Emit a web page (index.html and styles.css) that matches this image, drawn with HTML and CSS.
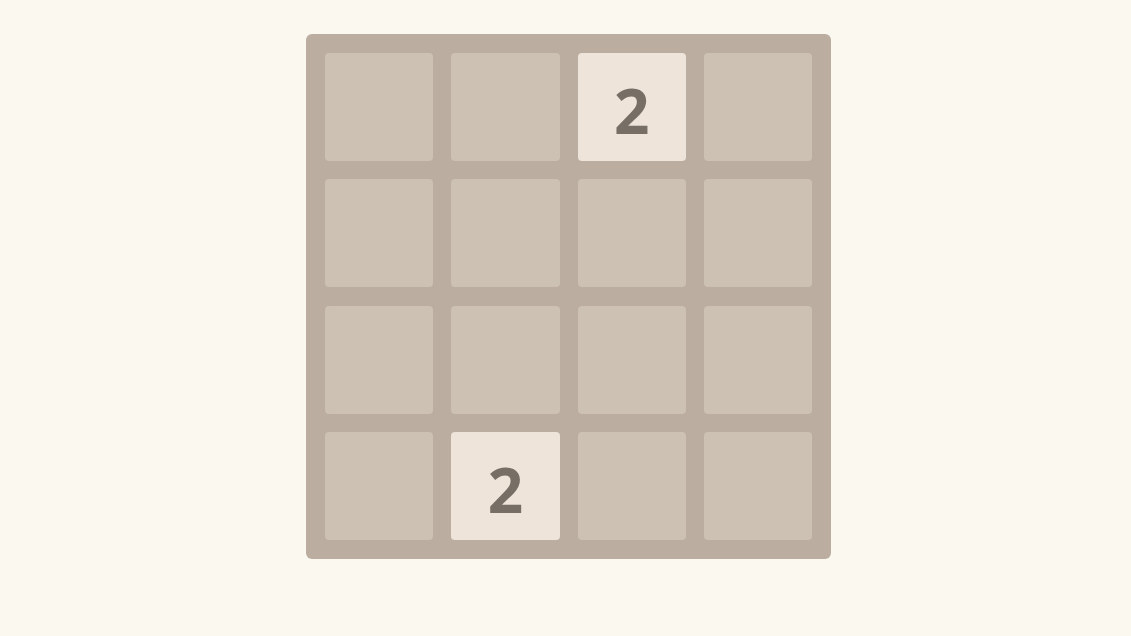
FILE: index.html
```html
<!DOCTYPE html>
<html lang="en">
	<head>
		<meta charset="utf-8">
		<meta name="viewport" content="width=device-width, initial-scale=1.0">
		<title>2048</title>
		<link rel="stylesheet" href="styles.css">
	</head>

	<body>
		<main>
			<div id="board">
				<div class="cell"></div>
				<div class="cell"></div>
				<div class="cell tile">2</div>
				<div class="cell"></div>

				<div class="cell"></div>
				<div class="cell"></div>
				<div class="cell"></div>
				<div class="cell"></div>

				<div class="cell"></div>
				<div class="cell"></div>
				<div class="cell"></div>
				<div class="cell"></div>

				<div class="cell"></div>
				<div class="cell tile">2</div>
				<div class="cell"></div>
				<div class="cell"></div>
			</div>
		</main>
	</body>
</html>
```

FILE: styles.css
```css
body{
	margin: 0;
	background-color: #faf8ef;
	font-family: "Open Sans", "DejaVu Sans", sans-serif;
}
main{
	display: flex;
	justify-content: center;
	padding: 34px 0 0 6px;
}
#board{
	display: grid;
	grid-template-columns: repeat(4, 1fr);
	grid-template-rows: repeat(4, 1fr);
	gap: 18.5px 18px;
	box-sizing: border-box;
	width: 525px;
	height: 525px;
	padding: 19px;
	border-radius: 6px;
	background-color: #bbada0;
}
.cell{
	border-radius: 4px;
	background-color: #cdc1b4;
}
.tile{
	display: flex;
	align-items: center;
	justify-content: center;
	padding-top: 6px;
	box-sizing: border-box;
	background-color: #eee4da;
	color: #776e65;
	font-size: 62px;
	font-weight: 700;
	line-height: 1;
}
```
